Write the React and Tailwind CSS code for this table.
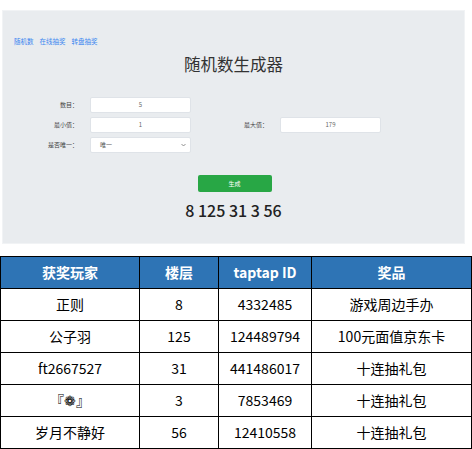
import React from 'react';

const winners = [
  { name: '正则', floor: '8', id: '4332485', prize: '游戏周边手办' },
  { name: '公子羽', floor: '125', id: '124489794', prize: '100元面值京东卡' },
  { name: 'ft2667527', floor: '31', id: '441486017', prize: '十连抽礼包' },
  { name: '『❁』', floor: '3', id: '7853469', prize: '十连抽礼包' },
  { name: '岁月不静好', floor: '56', id: '12410558', prize: '十连抽礼包' },
];

function Field({ label, value, labelWidth = 'w-[77px]' }) {
  return (
    <div className="flex items-center h-[16px]">
      <span className={`${labelWidth} text-right pr-[2px] text-[6px] text-[#444] leading-none`}>{label}</span>
      <div className="ml-[10px] w-[101px] h-[16px] bg-white border border-[#dfe3e8] rounded-[2px] flex items-center justify-center text-[6px] text-[#666] leading-none">
        {value}
      </div>
    </div>
  );
}

export default function App() {
  return (
    <div className="w-[472px] h-[449px] bg-white relative" style={{ fontFamily: '"Noto Sans CJK SC", "Noto Sans", sans-serif' }}>
      <div className="pt-[10px] pl-[2px] h-[256px]">
        <div className="w-[463px] h-[234px] bg-[#e9ecef] border border-[#f1f3f5] flex flex-col">
          <div className="flex gap-[6px] pl-[11px] pt-[27px] text-[6.5px] text-[#3b86f0] leading-none">
            <span>随机数</span>
            <span>在线抽奖</span>
            <span>转盘抽奖</span>
          </div>
          <h1 className="text-center text-[16.5px] text-[#333] mt-[11px] leading-none">随机数生成器</h1>
          <div className="mt-[25px] flex flex-col gap-[4px]">
            <Field label="数目：" value="5" />
            <div className="flex">
              <Field label="最小值：" value="1" />
              <Field label="最大值：" value="179" labelWidth="w-[79px]" />
            </div>
            <div className="flex items-center h-[16px]">
              <span className="w-[77px] text-right pr-[2px] text-[6px] text-[#444] leading-none">是否唯一：</span>
              <div className="ml-[10px] w-[101px] h-[16px] bg-white border border-[#dfe3e8] rounded-[2px] flex items-center justify-between pl-[9px] pr-[4px] text-[6px] text-[#555] leading-none">
                <span>唯一</span>
                <svg width="5" height="4" viewBox="0 0 10 6" fill="none" stroke="#777" strokeWidth="1.6">
                  <path d="M1 1l4 4 4-4" />
                </svg>
              </div>
            </div>
          </div>
          <div className="flex justify-center mt-[22px]">
            <button className="w-[74px] h-[17px] bg-[#28a745] rounded-[2px] text-white text-[6px] ml-[2px] leading-none">生成</button>
          </div>
          <div className="text-center text-[16px] font-medium text-[#222] mt-[10px] leading-none">8 125 31 3 56</div>
        </div>
      </div>
      <table className="border-collapse w-[471px] text-[14px] text-black" style={{ tableLayout: 'fixed' }}>
        <colgroup>
          <col className="w-[139px]" />
          <col className="w-[79px]" />
          <col className="w-[93px]" />
          <col className="w-[160px]" />
        </colgroup>
        <thead>
          <tr className="h-[32px] bg-[#2e74b5] text-white font-bold">
            <th className="border border-black font-bold">获奖玩家</th>
            <th className="border border-black font-bold">楼层</th>
            <th className="border border-black font-bold">taptap ID</th>
            <th className="border border-black font-bold">奖品</th>
          </tr>
        </thead>
        <tbody>
          {winners.map((w, i) => (
            <tr key={i} className="h-[32px] text-center">
              <td className="border border-black">{w.name}</td>
              <td className="border border-black">{w.floor}</td>
              <td className="border border-black">{w.id}</td>
              <td className="border border-black">{w.prize}</td>
            </tr>
          ))}
        </tbody>
      </table>
    </div>
  );
}
